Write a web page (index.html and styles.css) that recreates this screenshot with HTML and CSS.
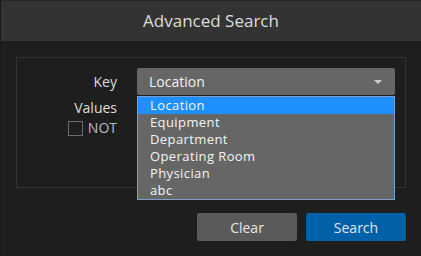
FILE: index.html
```html
<!DOCTYPE html>
<html lang="en">
<head>
    <meta charset="UTF-8">
    <title>Advanced Search</title>
    <link rel="stylesheet" href="styles.css">
</head>
<body>
<div class="dialog">
    <div class="dialog-title">Advanced Search</div>
    <div class="dialog-body">
        <div class="filter-box">
            <div class="field-label">Key</div>
            <div class="select-wrap">
                <div class="select">
                    <span>Location</span>
                    <span class="caret"></span>
                </div>
                <!--下拉列表-->
                <ul class="options">
                    <li class="active">Location</li>
                    <li>Equipment</li>
                    <li>Department</li>
                    <li>Operating Room</li>
                    <li>Physician</li>
                    <li>abc</li>
                </ul>
            </div>
            <div class="field-label values-label">
                <div>Values</div>
                <label class="not-check"><span class="box"></span>NOT</label>
            </div>
        </div>
        <div class="actions">
            <button class="btn btn-clear">Clear</button>
            <button class="btn btn-search">Search</button>
        </div>
    </div>
</div>
</body>
</html>
```

FILE: styles.css
```css
body,
ul,
li {
    margin: 0;
    padding: 0;
    list-style: none;
}
body {
    background: #1e1e1e;
    font-family: "Open Sans", "Liberation Sans", sans-serif;
    font-size: 14px;
    color: #ddd;
}
.dialog {
    width: 420px;
    height: 255px;
    border-top: 1px solid #262626;
    border-left: 1px solid #191919;
}
.dialog-title {
    height: 40px;
    line-height: 40px;
    background: #333;
    text-align: center;
    font-size: 17px;
    color: #ddd;
}
.dialog-body {
    padding: 16px 15px 0 15px;
}
.filter-box {
    display: grid;
    grid-template-columns: 100px 258px;
    column-gap: 20px;
    align-content: start;
    height: 119px;
    padding: 10px 10px 0 0;
    border: 1px solid #333;
}
.field-label {
    text-align: right;
    line-height: 27px;
}
.values-label {
    line-height: 18px;
    padding-top: 4px;
    grid-column: 1;
}
.not-check {
    display: flex;
    justify-content: flex-end;
    align-items: center;
    gap: 5px;
    color: #bbb;
    margin-top: 2px;
}
.not-check .box {
    width: 13px;
    height: 13px;
    border: 1px solid #6a6a6a;
}
.select-wrap {
    position: relative;
}
.select {
    display: flex;
    justify-content: space-between;
    align-items: center;
    height: 27px;
    padding: 0 13px 0 12px;
    background: #666;
    border-radius: 2px;
    color: #f2f2f2;
}
.caret {
    width: 0;
    height: 0;
    border-left: 4px solid transparent;
    border-right: 4px solid transparent;
    border-top: 4px solid #ccc;
}
.options {
    position: absolute;
    left: 0;
    right: 0;
    top: 28px;
    background: #666;
    border: 1px solid #7d9ccf;
    z-index: 2;
}
.options li {
    height: 17px;
    line-height: 17px;
    padding-left: 12px;
    font-size: 13px;
    letter-spacing: 0.4px;
    color: #f4f4f4;
}
.options li.active {
    background: #1e90ff;
}
.actions {
    display: flex;
    justify-content: flex-end;
    gap: 9px;
    margin-top: 25px;
}
.btn {
    width: 100px;
    height: 28px;
    border: none;
    border-radius: 2px;
    font-family: inherit;
    font-size: 14px;
    color: #e6e6e6;
    cursor: pointer;
}
.btn-clear {
    background: #5a5a5a;
}
.btn-search {
    background: #0061a8;
}
```
